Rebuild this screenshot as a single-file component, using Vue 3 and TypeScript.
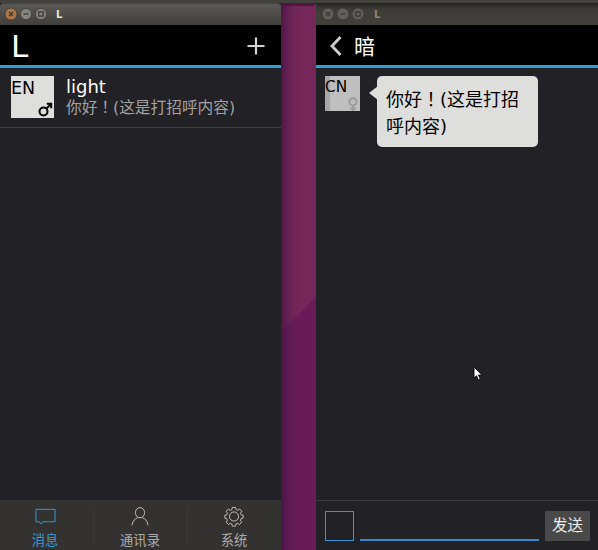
<script setup lang="ts">
interface Tab {
  id: 'messages' | 'contacts' | 'system'
  label: string
}

const tabs: Tab[] = [
  { id: 'messages', label: '消息' },
  { id: 'contacts', label: '通讯录' },
  { id: 'system', label: '系统' },
]
const activeTab: Tab['id'] = 'messages'
</script>

<template>
  <div class="desktop">
    <div class="menubar"></div>
    <div class="workspace">
      <section class="window focused">
        <div class="titlebar">
          <svg class="controls" width="46" height="14" viewBox="0 0 46 14">
            <g class="close"><circle cx="7" cy="7" r="6" /><path d="M5 5l4 4M9 5l-4 4" /></g>
            <g><circle cx="22" cy="7" r="5.7" /><path d="M19.5 7h5" /></g>
            <g><circle cx="37" cy="7" r="5.7" /><path d="M34.8 4.8h4.4v4.4h-4.4z" /></g>
          </svg>
          <span class="title">L</span>
        </div>
        <header class="header">
          <h1>L</h1>
          <svg class="add" width="18" height="18" viewBox="0 0 18 18"><path d="M9 0.5v17M0.5 9h17" /></svg>
        </header>
        <div class="list">
          <div class="row">
            <div class="avatar">
              <span>EN</span>
              <svg class="gender" width="15" height="15" viewBox="0 0 15 15">
                <circle cx="5.5" cy="9.5" r="4" /><path d="M8.4 6.6L13 2M8.8 1.8h4.4v4.4" />
              </svg>
            </div>
            <div class="summary">
              <div class="name">light</div>
              <div class="preview">你好<span class="mark">！</span>(这是打招呼内容)</div>
            </div>
          </div>
        </div>
        <nav class="tabs">
          <div v-for="tab in tabs" :key="tab.id" class="tab" :class="{ active: tab.id === activeTab }">
            <svg v-if="tab.id === 'messages'" width="22" height="22" viewBox="0 0 22 22">
              <path d="M1.5 3.5h20v13H8.8L6.5 19 5 16.500H1.500z" />
            </svg>
            <svg v-else-if="tab.id === 'contacts'" width="22" height="22" viewBox="0 0 22 22">
              <ellipse cx="11" cy="7" rx="4.8" ry="5.3" /><path d="M2.6 20.2c.6-4.6 3.5-7.2 6-8M13.4 12.2c3 .9 5.6 3.7 6 8" />
            </svg>
            <svg v-else width="22" height="22" viewBox="0 0 22 22">
              <circle cx="11" cy="11" r="4.8" />
              <path d="M9.3 1.5h3.4l.6 2.4 1.4.6 2.2-1.3 2.2 2.3-1.3 2.1.6 1.5 2.2.6v3.1l-2.3.6-.6 1.5 1.3 2.2-2.2 2.3-2.2-1.3-1.4.6-.6 2.4H9.3l-.6-2.4-1.4-.6-2.2 1.3-2.2-2.3 1.2-2.2-.6-1.5-2.1-.6V9.7l2.2-.6.6-1.5-1.3-2.1 2.2-2.3 2.2 1.3 1.4-.6z" />
            </svg>
            <span>{{ tab.label }}</span>
          </div>
        </nav>
      </section>

      <svg class="wallpaper" width="35" height="547" viewBox="0 0 35 547" preserveAspectRatio="none">
        <defs>
          <linearGradient id="shade"><stop offset="0" stop-color="#3c123c" stop-opacity=".75" /><stop offset=".15" stop-color="#48164a" stop-opacity=".5" /><stop offset=".55" stop-color="#602050" stop-opacity="0" /></linearGradient>
        </defs>
        <path fill="#762759" d="M0 0h35v547H0z" />
        <path fill="#691b57" d="M0 329L35 294v253H0z" />
        <path fill="url(#shade)" d="M0 0h35v547H0z" />
        <path fill="#511341" d="M0 0h35v1H33v2H2V1H0z" />
      </svg>

      <section class="window chat">
        <div class="titlebar">
          <svg class="controls" width="46" height="14" viewBox="0 0 46 14">
            <g><circle cx="7" cy="7" r="6" /><path d="M5 5l4 4M9 5l-4 4" /></g>
            <g><circle cx="22" cy="7" r="6" /><path d="M19.5 7h5" /></g>
            <g><circle cx="37" cy="7" r="6" /><path d="M34.8 4.8h4.4v4.4h-4.4z" /></g>
          </svg>
          <span class="title">L</span>
        </div>
        <header class="header">
          <svg class="back" width="12" height="20" viewBox="0 0 12 20"><path d="M10.5 1L2 10l8.5 9" /></svg>
          <h2>暗</h2>
        </header>
        <div class="conversation">
          <div class="avatar small">
            <span>CN</span>
            <svg class="gender" width="10" height="14" viewBox="0 0 10 14">
              <circle cx="5" cy="4.8" r="3.6" /><path d="M5 8.4V14M2 11.5h6" />
            </svg>
          </div>
          <svg class="tail" width="9" height="14" viewBox="0 0 9 14"><path d="M9 0L0 7l9 7z" /></svg>
          <div class="bubble">
            <div>你好<span class="mark">！</span>(这是打招</div>
            <div>呼内容)</div>
          </div>
        </div>
        <footer class="composer">
          <div class="attach"></div>
          <div class="field"></div>
          <div class="send">发送</div>
        </footer>
      </section>
    </div>
    <svg class="cursor" width="10" height="16" viewBox="0 0 10 16">
      <path d="M1 1v11l2.5-2.2L5.3 14l2-1-1.9-3.9H9z" />
    </svg>
  </div>
</template>

<style>
body {
  background: #222125;
  overflow: hidden;
}
</style>

<style scoped>
.desktop {
  position: relative;
  display: flex;
  flex-direction: column;
  width: 598px;
  height: 550px;
  font-family: "DejaVu Sans", "Noto Sans CJK SC", sans-serif;
}
.menubar { height: 3px; background: #42413b; }
.workspace { display: flex; flex: 1; background: #2a2326; }
.wallpaper { flex: none; height: 547px; }
.window { display: flex; flex-direction: column; width: 281px; background: #222125; }
.chat { width: 282px; }
.titlebar {
  display: flex;
  align-items: center;
  box-sizing: border-box;
  height: 22px;
  padding-left: 4px;
  background: linear-gradient(#22211f, #33322f 3px, #3e3d38 7px, #403f3a);
}
.focused .titlebar {
  background: linear-gradient(#444340, #5a5954 2px, #504f4b 9px, #403f3b);
  border-radius: 4px 4px 0 0;
}
.chat .titlebar { padding-left: 5px; }
.controls circle { fill: #615f59; stroke: #383733; stroke-width: .8; }
.controls path { fill: none; stroke: #383733; stroke-width: 1.2; }
.focused .controls circle { fill: #85827d; }
.focused .controls .close circle { fill: #ad7448; }
.title { margin: 2px 0 0 6px; font-size: 10px; line-height: 20px; font-weight: bold; color: #e5e2dc; }
.chat .title { margin-left: 7px; color: #928575; }
.header {
  display: flex;
  align-items: center;
  box-sizing: border-box;
  height: 43px;
  padding: 0 16px 0 11px;
  background: #000;
  border-bottom: 3px solid #2e9fd2;
  color: #fff;
}
h1 { margin: 2px 0 0; font-size: 31px; line-height: 40px; font-weight: normal; }
.add { margin: 2px 0 0 auto; fill: none; stroke: #d4d3d2; stroke-width: 2.2; }
.back { margin-top: 2px; fill: none; stroke: #cececc; stroke-width: 2.8; }
.chat .header { padding-left: 14px; }
h2 { margin: 4px 0 0 12px; font-size: 21px; line-height: 36px; font-weight: normal; }
.mark { font-family: "Noto Sans CJK TC", sans-serif; line-height: 1; }
.list { flex: 1; }
.row {
  display: flex;
  box-sizing: border-box;
  height: 60px;
  padding: 8px 0 0 11px;
  border-bottom: 1px solid #414044;
}
.avatar { position: relative; width: 43px; height: 42px; background: #dededc; color: #000; font-size: 17.5px; line-height: 25px; }
.gender { position: absolute; right: 1px; bottom: 1px; fill: none; stroke: #000; stroke-width: 2; }
.summary { margin-left: 12px; }
.name { color: #fff; font-size: 18px; line-height: 21px; }
.preview { color: #a3a1a1; font-size: 15.7px; line-height: 21px; white-space: nowrap; }
.tabs { display: flex; box-sizing: border-box; height: 50px; background: #333230; }
.tab {
  display: flex;
  flex-direction: column;
  align-items: center;
  box-sizing: border-box;
  width: 93px;
  padding-top: 6px;
  padding-right: 3px;
  color: #aaa;
  font-size: 13.3px;
  line-height: 18px;
}
.tab + .tab { width: 94px; padding-right: 0; background: linear-gradient(#3b3a39, #3b3a39) 0 8px / 1px 36px no-repeat; }
.tab span { margin-top: 5px; }
.tab svg { fill: none; stroke: #c5c4c4; stroke-width: 1; }
.tab.active { color: #309ed7; }
.tab.active svg { stroke: #309ed7; }
.conversation { display: flex; align-items: flex-start; flex: 1; padding: 8px 0 0 9px; }
.small { width: 35px; height: 35px; background: linear-gradient(90deg, #a8a7a8 5px, #c0bfbf 5px); font-size: 15.3px; line-height: 23px; }
.small .gender { stroke: #9c9b9b; right: 2px; bottom: 0; }
.tail { margin: 10px -1px 0 9px; fill: #dededc; }
.bubble {
  box-sizing: border-box;
  width: 161px;
  height: 71px;
  padding: 10px 8px 0 9px;
  border-radius: 5px;
  background: #dededc;
  color: #000;
  font-size: 18px;
  line-height: 27px;
  white-space: nowrap;
}
.composer {
  display: flex;
  box-sizing: border-box;
  height: 50px;
  padding: 10px 8px 0 9px;
  border-top: 1px solid #39383b;
}
.attach { box-sizing: border-box; width: 29px; height: 30px; border: 1px solid #3d93d6; }
.field { box-sizing: border-box; width: 179px; height: 30px; margin-left: 6px; border-bottom: 2px solid #3787c8; }
.send { width: 45px; height: 30px; margin-left: 6px; background: #49494a; color: #eee; font-size: 15.5px; line-height: 31px; text-align: center; }
.cursor { position: absolute; left: 473px; top: 366px; fill: #fff; stroke: #111; stroke-width: 1; }
</style>
